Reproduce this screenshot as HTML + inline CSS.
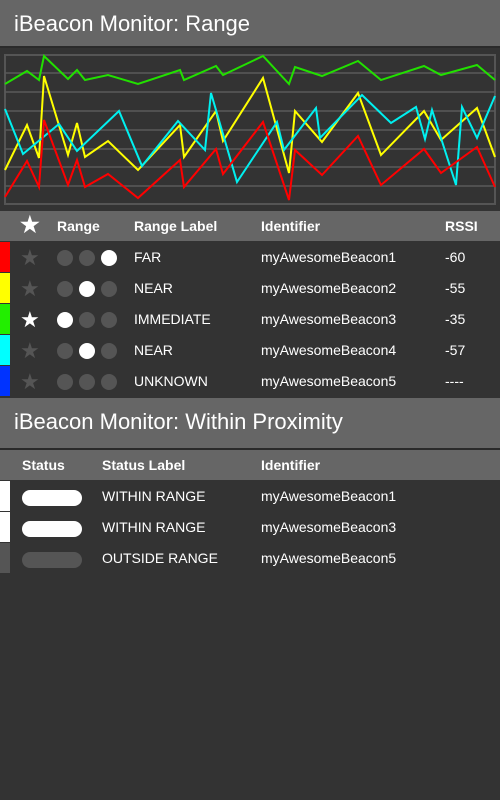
<!DOCTYPE html>
<html><head><style>
body{margin:0;width:500px;height:800px;background:#333;font-family:"Liberation Sans",sans-serif;color:#fff;position:relative;overflow:hidden}
.a{position:absolute}
.title{left:0;width:500px;height:48px;background:#666;font-size:22px;line-height:48px;padding-left:14px;box-sizing:border-box;border-bottom:2px solid #2a2a2a}
.hdr{left:0;width:500px;height:30px;background:#666;font-size:14px;font-weight:bold;line-height:30px}
.t{font-size:14px;line-height:31px}
.dot{width:16px;height:16px;border-radius:50%;background:#555;position:absolute}
.w{background:#fff}
.pill{width:60px;height:16px;border-radius:8px;position:absolute;left:22px}
</style></head><body>
<div class="a title" style="top:0">iBeacon Monitor: Range</div>
<svg class="a" style="left:0;top:50px" width="500" height="160" viewBox="0 50 500 160">
<rect x="5" y="55" width="490" height="149" fill="none" stroke="#555" stroke-width="2"/>
<g stroke="#5a5a5a" stroke-width="1.5">
<line x1="5" x2="495" y1="73" y2="73"/><line x1="5" x2="495" y1="92" y2="92"/><line x1="5" x2="495" y1="111" y2="111"/><line x1="5" x2="495" y1="130" y2="130"/><line x1="5" x2="495" y1="149" y2="149"/><line x1="5" x2="495" y1="167" y2="167"/><line x1="5" x2="495" y1="186" y2="186"/></g>
<g fill="none" stroke-width="2">
<polyline stroke="#22e000" points="5,84 27,71 39,80 44,56 68,79 77,70 85,80 108,75 138,84 180,70 184,80 216,66 223,75 263,56 289,84 295,67 322,76 358,61 381,80 424,66 441,75 477,65 495,80"/>
<polyline stroke="#ffff00" points="5,170 27,125 39,158 44,76 68,155 77,123 85,157 108,141 138,170 180,125 184,157 216,111 223,141 263,78 289,173 295,111 322,142 358,93 381,155 424,111 441,140 477,108 495,157"/>
<polyline stroke="#00f0f0" points="5,109 23,154 59,124 77,151 119,111 142,166 178,121 205,150 211,93 237,182 277,122 284,150 316,108 320,138 362,95 391,123 416,107 425,139 432,110 456,185 462,107 477,138 495,96"/>
<polyline stroke="#ff0000" points="5,197 27,161 39,187 44,120 68,185 77,160 85,187 108,174 138,198 180,160 184,187 216,149 223,174 263,122 289,200 295,150 322,175 358,136 381,185 424,149 441,173 477,147 495,187"/>
</g></svg>
<div class="a hdr" style="top:211px">
<span class="a" style="left:20px;font-size:22px;top:-1px">★</span>
<span class="a" style="left:57px">Range</span><span class="a" style="left:134px">Range Label</span><span class="a" style="left:261px">Identifier</span><span class="a" style="left:445px">RSSI</span></div>

<!-- rows -->
<div class="a" style="top:242px;left:0;width:10px;height:30px;background:#f00"></div>
<div class="a" style="top:273px;left:0;width:10px;height:30px;background:#ff0"></div>
<div class="a" style="top:304px;left:0;width:10px;height:30px;background:#2e0"></div>
<div class="a" style="top:335px;left:0;width:10px;height:30px;background:#0ff"></div>
<div class="a" style="top:366px;left:0;width:10px;height:30px;background:#0033ff"></div>

<div class="a" style="top:242px;left:0;width:500px;height:31px">
<span class="a t" style="left:20px;font-size:22px;color:#555">★</span>
<div class="dot" style="left:57px;top:8px"></div><div class="dot" style="left:79px;top:8px"></div><div class="dot w" style="left:101px;top:8px"></div>
<span class="a t" style="left:134px">FAR</span><span class="a t" style="left:261px">myAwesomeBeacon1</span><span class="a t" style="left:445px">-60</span></div>
<div class="a" style="top:273px;left:0;width:500px;height:31px">
<span class="a t" style="left:20px;font-size:22px;color:#555">★</span>
<div class="dot" style="left:57px;top:8px"></div><div class="dot w" style="left:79px;top:8px"></div><div class="dot" style="left:101px;top:8px"></div>
<span class="a t" style="left:134px">NEAR</span><span class="a t" style="left:261px">myAwesomeBeacon2</span><span class="a t" style="left:445px">-55</span></div>
<div class="a" style="top:304px;left:0;width:500px;height:31px">
<span class="a t" style="left:20px;font-size:22px;color:#fff">★</span>
<div class="dot w" style="left:57px;top:8px"></div><div class="dot" style="left:79px;top:8px"></div><div class="dot" style="left:101px;top:8px"></div>
<span class="a t" style="left:134px">IMMEDIATE</span><span class="a t" style="left:261px">myAwesomeBeacon3</span><span class="a t" style="left:445px">-35</span></div>
<div class="a" style="top:335px;left:0;width:500px;height:31px">
<span class="a t" style="left:20px;font-size:22px;color:#555">★</span>
<div class="dot" style="left:57px;top:8px"></div><div class="dot w" style="left:79px;top:8px"></div><div class="dot" style="left:101px;top:8px"></div>
<span class="a t" style="left:134px">NEAR</span><span class="a t" style="left:261px">myAwesomeBeacon4</span><span class="a t" style="left:445px">-57</span></div>
<div class="a" style="top:366px;left:0;width:500px;height:31px">
<span class="a t" style="left:20px;font-size:22px;color:#555">★</span>
<div class="dot" style="left:57px;top:8px"></div><div class="dot" style="left:79px;top:8px"></div><div class="dot" style="left:101px;top:8px"></div>
<span class="a t" style="left:134px">UNKNOWN</span><span class="a t" style="left:261px">myAwesomeBeacon5</span><span class="a t" style="left:445px">----</span></div>

<div class="a title" style="top:398px;height:52px;line-height:48px">iBeacon Monitor: Within Proximity</div>
<div class="a hdr" style="top:450px"><span class="a" style="left:22px">Status</span><span class="a" style="left:102px">Status Label</span><span class="a" style="left:261px">Identifier</span></div>

<div class="a" style="top:481px;left:0;width:10px;height:30px;background:#fff"></div>
<div class="a" style="top:512px;left:0;width:10px;height:30px;background:#fff"></div>
<div class="a" style="top:543px;left:0;width:10px;height:30px;background:#555"></div>
<div class="a" style="top:481px;left:0;width:500px;height:31px"><div class="pill" style="top:9px;background:#fff"></div><span class="a t" style="left:102px">WITHIN RANGE</span><span class="a t" style="left:261px">myAwesomeBeacon1</span></div>
<div class="a" style="top:512px;left:0;width:500px;height:31px"><div class="pill" style="top:9px;background:#fff"></div><span class="a t" style="left:102px">WITHIN RANGE</span><span class="a t" style="left:261px">myAwesomeBeacon3</span></div>
<div class="a" style="top:543px;left:0;width:500px;height:31px"><div class="pill" style="top:9px;background:#555"></div><span class="a t" style="left:102px">OUTSIDE RANGE</span><span class="a t" style="left:261px">myAwesomeBeacon5</span></div>
</body></html>
